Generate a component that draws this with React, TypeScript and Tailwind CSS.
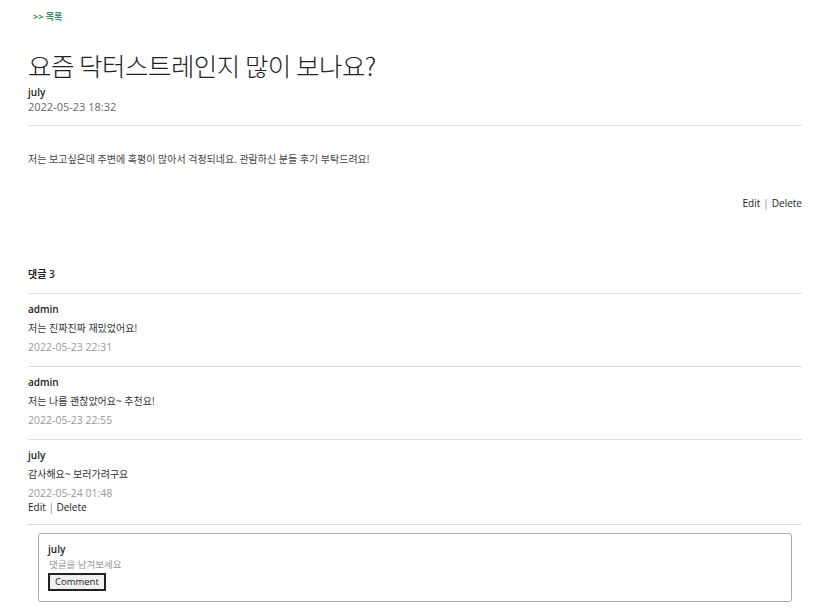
import React from 'react';

type Reply = { author: string; text: string; date: string; mine?: boolean };

const replies: Reply[] = [
  { author: 'admin', text: '저는 진짜진짜 재밌었어요!', date: '2022-05-23 22:31' },
  { author: 'admin', text: '저는 나름 괜찮았어요~ 추천요!', date: '2022-05-23 22:55' },
  { author: 'july', text: '감사해요~ 보러가려구요', date: '2022-05-24 01:48', mine: true },
];

const font = { fontFamily: '"Open Sans", "Noto Sans CJK KR", sans-serif' };

const App: React.FC = () => {
  return (
    <div className="w-[833px] min-h-[612px] bg-white text-[#222] overflow-hidden" style={font}>
      <div className="pl-[28px] pr-[31px] pt-[10px]">
        <a className="block pl-[5px] text-[9px] font-bold text-[#3a8a5c] leading-[13px]">&gt;&gt; 목록</a>

        <h1
          className="mt-[26px] text-[25.5px] leading-[32px] font-light text-[#222] tracking-[-0.5px]"
          style={{ fontFamily: '"Noto Sans CJK KR", sans-serif' }}
        >
          요즘 닥터스트레인지 많이 보나요?
        </h1>
        <div className="mt-[5px] text-[10px] font-semibold leading-[13px]">july</div>
        <div className="text-[11px] text-[#666] leading-[15px]">2022-05-23 18:32</div>
        <div className="mt-[11px] h-px bg-[#ddd]" />

        <p className="mt-[26px] text-[10px] text-[#444] leading-[14px]">
          저는 보고싶은데 주변에 혹평이 많아서 걱정되네요. 관람하신 분들 후기 부탁드려요!
        </p>

        <div className="mt-[30px] flex justify-end text-[10px] leading-[14px] text-[#222]">
          <span>Edit</span>
          <span className="mx-[3px] text-[#888]">|</span>
          <span>Delete</span>
        </div>

        <div className="mt-[57px] text-[10px] font-semibold leading-[14px]">댓글 3</div>
        <div className="mt-[12px] h-px bg-[#ddd]" />

        {replies.map((r, i) => (
          <div key={i} className={`border-b border-[#ddd] pt-[8px] ${r.mine ? 'pb-[10px]' : 'pb-[12px]'}`}>
            <div className="text-[10px] font-semibold leading-[14px]">{r.author}</div>
            <div className="mt-[5px] text-[10px] text-[#333] leading-[14px]">{r.text}</div>
            <div className="mt-[5px] text-[10.5px] text-[#999] leading-[14px]">{r.date}</div>
            {r.mine && (
              <div className="text-[10px] leading-[14px] text-[#222]">
                Edit <span className="text-[#888]">|</span> Delete
              </div>
            )}
          </div>
        ))}

        <div className="mt-[8px] mx-[10px] border border-[#aaa] rounded-[3px] px-[9px] pt-[8px] h-[69px]">
          <div className="text-[10px] font-semibold leading-[14px]">july</div>
          <div className="mt-[2px] text-[9.5px] text-[#999] leading-[14px] pl-[1px]">댓글을 남겨보세요</div>
          <button className="block mt-[1px] border-2 border-[#222] bg-[#f0f0f0] px-[5px] text-[9.5px] leading-[14px] text-[#222]">
            Comment
          </button>
        </div>
      </div>
    </div>
  );
};

export default App;
